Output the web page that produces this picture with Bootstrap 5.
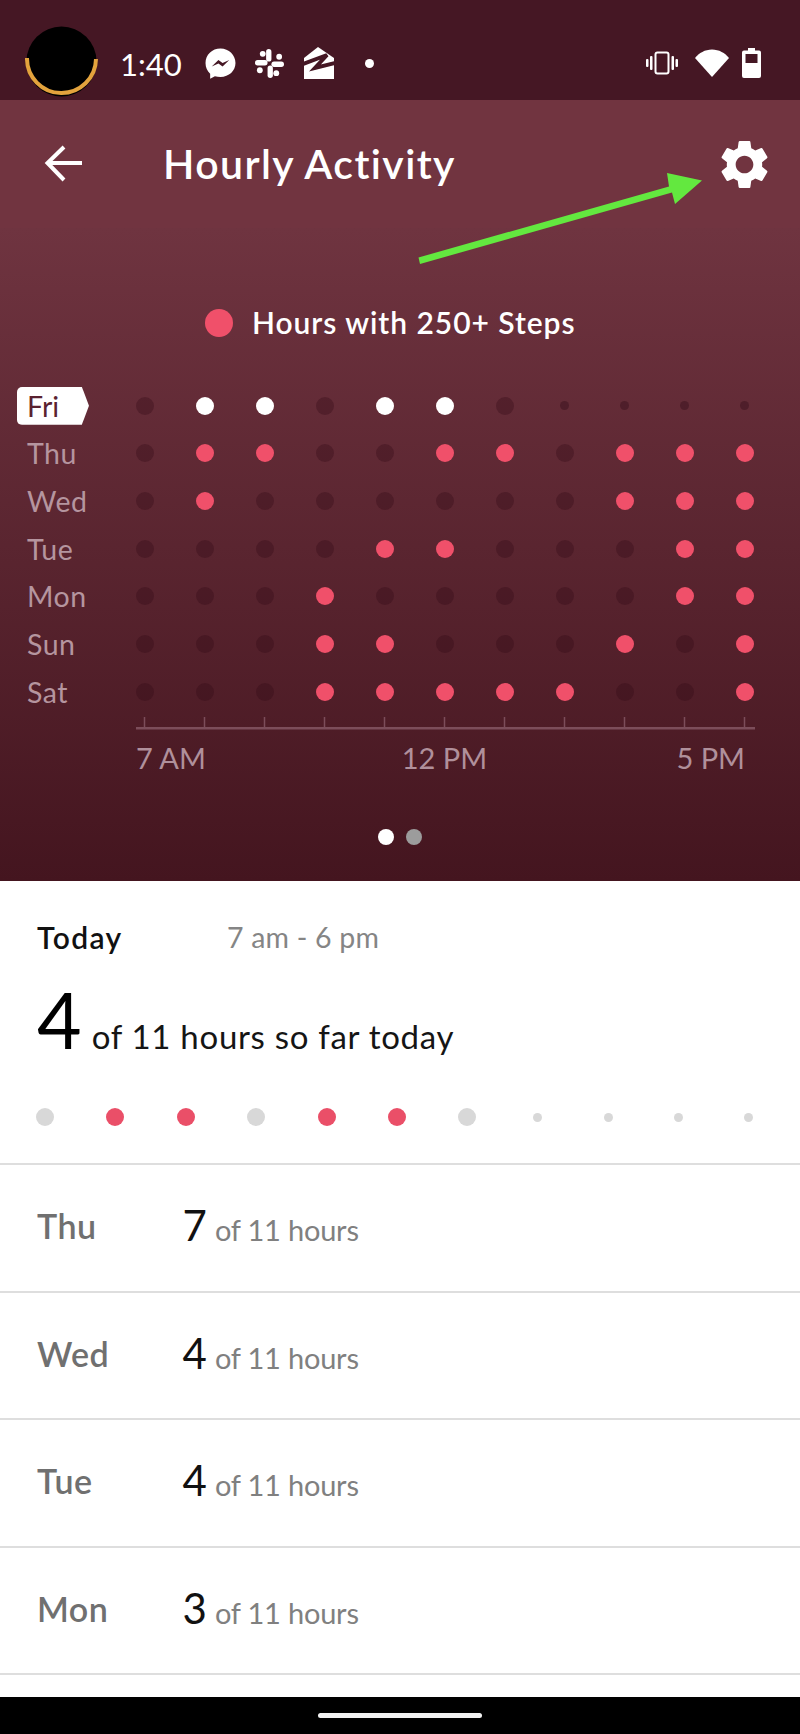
<!DOCTYPE html>
<html lang="en">
<head>
<meta charset="utf-8">
<title>Hourly Activity</title>
<link href="https://cdn.jsdelivr.net/npm/bootstrap@5.3.0/dist/css/bootstrap.min.css" rel="stylesheet">
<style>
html,body{margin:0;padding:0;background:#fff}
body{width:800px;height:1734px;overflow:hidden;font-family:"Lato","Liberation Sans",sans-serif;color:#000;position:relative}
.stat-bar{height:100px;background:#451724;color:#fff;padding-left:25px;padding-right:39px;padding-top:26px}
.avatar{width:73px;height:73px;margin-top:-4px;margin-right:22px;display:block}
.clock{font-size:31px;line-height:1;width:66px;margin-top:2px}
.ic-msg{margin-left:19px}
.ic-slack{margin-left:19px}
.ic-zil{margin-left:20px}
.ic-dot{margin-left:31px;width:9px;height:9px}
.ic-wifi{margin-left:17px}
.ic-bat{margin-left:13px}
.app-head{height:128px;background:#713440;color:#fff;padding-left:44px;padding-right:26px}
.app-title{font-size:41px;font-weight:600;margin:0 0 2px 81px;line-height:1;letter-spacing:1.4px}
.hero{height:653px;background:linear-gradient(#6f3440,#44151f);color:#fff}
.legend-row{padding-top:75px;height:115px;padding-left:205px}
.legend-dot{width:28px;height:28px;border-radius:50%;background:#f0506a;margin-right:19px}
.legend-text{font-size:30px;font-weight:600;line-height:40px;letter-spacing:.95px;margin-top:-2px}
.chart{margin-top:39px}
.day-row{height:47.67px;padding-left:27px}
.day-name{width:87.5px;font-size:28.5px;line-height:1;color:#b5959f;letter-spacing:.5px}
.day-tag{width:72px;height:38px;margin-left:-10px;margin-right:25.5px;padding-left:10px;background:#fff;color:#5a2230;font-size:28.5px;line-height:38px;border-radius:5px 0 0 5px;clip-path:polygon(0 0,90% 0,100% 50%,90% 100%,0 100%)}
.cell-h{width:60px;display:flex;justify-content:center;align-items:center}
.dt{width:18px;height:18px;border-radius:50%;background:rgba(48,10,22,.33);display:block}
.ds{width:9px;height:9px;border-radius:50%;background:rgba(48,10,22,.4);display:block}
.dp{width:18px;height:18px;border-radius:50%;background:#f0506a;display:block}
.dw{width:18px;height:18px;border-radius:50%;background:#fff;display:block}
.axis-svg{display:block;margin-left:136px;width:620px;height:14px}
.axis-labels{display:grid;grid-template-columns:1fr auto 1fr;margin:10px 55px 0 136px;font-size:29px;line-height:36px;color:#b0909b}
.pager{margin-top:53px;gap:12px}
.pg{width:16px;height:16px;border-radius:50%;background:#fff}
.pg-off{background:#9c9c9c}
.today-wrap{height:282px;background:#fff;padding:35px 0 0 37px}
.today-a{font-size:30px;font-weight:600;width:190px;line-height:42px;color:#111;letter-spacing:1.4px}
.today-b{font-size:28.5px;line-height:42px;color:#858585;letter-spacing:.2px}
.big-line{margin-top:21px;line-height:80px;height:80px}
.big-num{font-size:77px;line-height:80px;margin-right:10px}
.big-txt{font-size:33px;letter-spacing:.7px;color:#151515}
.today-dots{margin-top:49px;margin-left:-1px;height:18px}
.td-cell{flex:none;width:70.4px;display:flex;justify-content:flex-start}
.tg,.tr{width:18px;height:18px;border-radius:50%;display:block}
.tg{background:#d8d8d8}
.tr{background:#ea4f68}
.tx{width:9px;height:9px;border-radius:50%;background:#d8d8d8;display:block;margin:5px 0 0 4.5px}
.list-group-item.hour-row{height:127.6px;border:0;border-top:2px solid #dedede;padding:0 0 0 37px;background:#fff;border-radius:0}
.hr-day{width:145.5px;font-size:34px;font-weight:600;color:#707070;line-height:1;letter-spacing:.5px;margin-top:-3px}
.hr-num{font-size:42px;line-height:1;color:#111;margin-right:8px}
.hr-txt{font-size:29px;color:#808080;letter-spacing:-.2px}
.last-rule{border-top:2px solid #dedede;height:24px;background:#fff}
.nav-zone{height:37px;background:#000}
.home-bar{width:164px;height:5px;background:#f2f2f2;border-radius:3px}
.arrow-over{position:absolute;left:410px;top:170px;width:300px;height:100px}
</style>
</head>
<body>
<div class="stat-bar d-flex align-items-center">
  <svg class="avatar" viewBox="0 0 73 73"><circle cx="36.500" cy="36.500" r="35" fill="#000"/><path d="M2 33a34.500 34.500 0 0 0 69 1" fill="none" stroke="#e3a33d" stroke-width="4"/></svg>
  <span class="clock">1:40</span>
  <svg class="ic-msg" width="31" height="31" viewBox="0 0 30 30"><path d="M15 .5C6.800.5.500 6.500.500 14.500c0 4.200 1.700 7.800 4.500 10.300v5l4.600-2.500c1.700.5 3.500.7 5.400.7 8.200 0 14.500-6 14.500-13.500S23.200.5 15 .5z" fill="#fff"/><path d="M6.500 18l6.500-6.500 4 3 6.500-3-6.500 6.500-4-3z" fill="#451724"/></svg>
  <svg class="ic-slack" width="29" height="29" viewBox="0 0 30 30" fill="#fff"><rect x="0" y="11.500" width="13" height="5.500" rx="2.750"/><rect x="17" y="13" width="13" height="5.500" rx="2.750"/><rect x="11.500" y="0" width="5.500" height="13" rx="2.750"/><rect x="13" y="17" width="5.500" height="13" rx="2.750"/><circle cx="8" cy="5" r="3"/><circle cx="25" cy="8" r="3"/><circle cx="22" cy="25" r="3"/><circle cx="5" cy="22" r="3"/></svg>
  <svg class="ic-zil" width="30" height="32" viewBox="0 0 30 32"><path d="M14 0L30 11v21H0V11z" fill="#fff"/><path d="M-1 17L23 8 11 21l20-5" fill="none" stroke="#451724" stroke-width="4"/></svg>
  <span class="ic-dot d-block rounded-circle bg-white"></span>
  <span class="flex-grow-1"></span>
  <svg width="32" height="24" viewBox="0 0 32 24" fill="#fff"><rect x="0" y="8" width="2.500" height="8" rx="1"/><rect x="4" y="5" width="2.500" height="14" rx="1"/><rect x="25.500" y="5" width="2.500" height="14" rx="1"/><rect x="29.500" y="8" width="2.500" height="8" rx="1"/><rect x="9.500" y="1.500" width="13" height="21" rx="2" fill="none" stroke="#fff" stroke-width="2"/></svg>
  <svg class="ic-wifi" width="34" height="28" viewBox="0 0 34 28"><path d="M0 9C4 4 10 .5 17 .5S30 4 34 9L17 28z" fill="#fff"/></svg>
  <svg class="ic-bat" width="19" height="30" viewBox="0 0 19 30"><path d="M6 0h7v2.500h4a2 2 0 0 1 2 2V28a2 2 0 0 1-2 2H2a2 2 0 0 1-2-2V4.500a2 2 0 0 1 2-2h4z" fill="#fff"/><rect x="3.500" y="6" width="12" height="9" fill="#451724"/></svg>
</div>
<div class="app-head d-flex align-items-center">
  <svg width="38" height="38" viewBox="0 0 38 38" fill="none" stroke="#fff" stroke-width="4"><path d="M38 18H4M20 2 3.500 18 20 35"/></svg>
  <h1 class="app-title">Hourly Activity</h1>
  <span class="flex-grow-1"></span>
  <svg width="59" height="59" viewBox="0 0 24 24" fill="#fff"><path d="M19.140 12.940c.04-.3.06-.61.06-.94 0-.32-.02-.64-.07-.94l2.030-1.580c.18-.14.23-.41.12-.61l-1.920-3.320c-.12-.22-.37-.29-.59-.22l-2.390.96c-.5-.38-1.030-.7-1.620-.94l-.36-2.540c-.04-.24-.24-.41-.48-.41h-3.840c-.24 0-.43.17-.47.41l-.36 2.540c-.59.24-1.130.57-1.620.94l-2.390-.96c-.22-.08-.47 0-.59.22L2.740 8.870c-.12.21-.08.47.12.61l2.030 1.580c-.05.3-.09.63-.09.94s.02.64.07.94l-2.030 1.580c-.18.14-.23.41-.12.61l1.920 3.320c.12.22.37.29.59.22l2.390-.96c.5.38 1.030.7 1.620.94l.36 2.540c.05.24.24.41.48.41h3.840c.24 0 .44-.17.47-.41l.36-2.540c.59-.24 1.130-.56 1.620-.94l2.390.96c.22.08.47 0 .59-.22l1.920-3.320c.12-.22.07-.47-.12-.61l-2.010-1.580zM12 15.600c-1.980 0-3.600-1.620-3.600-3.600s1.620-3.600 3.600-3.600 3.600 1.620 3.600 3.600-1.620 3.600-3.600 3.600z"/></svg>
</div>
<div class="hero">
  <div class="legend-row d-flex align-items-center"><span class="legend-dot"></span><span class="legend-text">Hours with 250+ Steps</span></div>
  <div class="chart">
    <div class="day-row d-flex align-items-center"><span class="day-tag">Fri</span><span class="cell-h"><i class="dt"></i></span><span class="cell-h"><i class="dw"></i></span><span class="cell-h"><i class="dw"></i></span><span class="cell-h"><i class="dt"></i></span><span class="cell-h"><i class="dw"></i></span><span class="cell-h"><i class="dw"></i></span><span class="cell-h"><i class="dt"></i></span><span class="cell-h"><i class="ds"></i></span><span class="cell-h"><i class="ds"></i></span><span class="cell-h"><i class="ds"></i></span><span class="cell-h"><i class="ds"></i></span></div>
    <div class="day-row d-flex align-items-center"><span class="day-name">Thu</span><span class="cell-h"><i class="dt"></i></span><span class="cell-h"><i class="dp"></i></span><span class="cell-h"><i class="dp"></i></span><span class="cell-h"><i class="dt"></i></span><span class="cell-h"><i class="dt"></i></span><span class="cell-h"><i class="dp"></i></span><span class="cell-h"><i class="dp"></i></span><span class="cell-h"><i class="dt"></i></span><span class="cell-h"><i class="dp"></i></span><span class="cell-h"><i class="dp"></i></span><span class="cell-h"><i class="dp"></i></span></div>
    <div class="day-row d-flex align-items-center"><span class="day-name">Wed</span><span class="cell-h"><i class="dt"></i></span><span class="cell-h"><i class="dp"></i></span><span class="cell-h"><i class="dt"></i></span><span class="cell-h"><i class="dt"></i></span><span class="cell-h"><i class="dt"></i></span><span class="cell-h"><i class="dt"></i></span><span class="cell-h"><i class="dt"></i></span><span class="cell-h"><i class="dt"></i></span><span class="cell-h"><i class="dp"></i></span><span class="cell-h"><i class="dp"></i></span><span class="cell-h"><i class="dp"></i></span></div>
    <div class="day-row d-flex align-items-center"><span class="day-name">Tue</span><span class="cell-h"><i class="dt"></i></span><span class="cell-h"><i class="dt"></i></span><span class="cell-h"><i class="dt"></i></span><span class="cell-h"><i class="dt"></i></span><span class="cell-h"><i class="dp"></i></span><span class="cell-h"><i class="dp"></i></span><span class="cell-h"><i class="dt"></i></span><span class="cell-h"><i class="dt"></i></span><span class="cell-h"><i class="dt"></i></span><span class="cell-h"><i class="dp"></i></span><span class="cell-h"><i class="dp"></i></span></div>
    <div class="day-row d-flex align-items-center"><span class="day-name">Mon</span><span class="cell-h"><i class="dt"></i></span><span class="cell-h"><i class="dt"></i></span><span class="cell-h"><i class="dt"></i></span><span class="cell-h"><i class="dp"></i></span><span class="cell-h"><i class="dt"></i></span><span class="cell-h"><i class="dt"></i></span><span class="cell-h"><i class="dt"></i></span><span class="cell-h"><i class="dt"></i></span><span class="cell-h"><i class="dt"></i></span><span class="cell-h"><i class="dp"></i></span><span class="cell-h"><i class="dp"></i></span></div>
    <div class="day-row d-flex align-items-center"><span class="day-name">Sun</span><span class="cell-h"><i class="dt"></i></span><span class="cell-h"><i class="dt"></i></span><span class="cell-h"><i class="dt"></i></span><span class="cell-h"><i class="dp"></i></span><span class="cell-h"><i class="dp"></i></span><span class="cell-h"><i class="dt"></i></span><span class="cell-h"><i class="dt"></i></span><span class="cell-h"><i class="dt"></i></span><span class="cell-h"><i class="dp"></i></span><span class="cell-h"><i class="dt"></i></span><span class="cell-h"><i class="dp"></i></span></div>
    <div class="day-row d-flex align-items-center"><span class="day-name">Sat</span><span class="cell-h"><i class="dt"></i></span><span class="cell-h"><i class="dt"></i></span><span class="cell-h"><i class="dt"></i></span><span class="cell-h"><i class="dp"></i></span><span class="cell-h"><i class="dp"></i></span><span class="cell-h"><i class="dp"></i></span><span class="cell-h"><i class="dp"></i></span><span class="cell-h"><i class="dp"></i></span><span class="cell-h"><i class="dt"></i></span><span class="cell-h"><i class="dt"></i></span><span class="cell-h"><i class="dp"></i></span></div>
  </div>
  <svg class="axis-svg" viewBox="0 0 620 14"><rect x="0" y="11" width="619" height="2.500" fill="#7c4d5a"/><g stroke="#7c4d5a" stroke-width="1.500"><path d="M8.500 1v10M68.500 1v10M128.500 1v10M188.500 1v10M248.500 1v10M308.500 1v10M368.500 1v10M428.500 1v10M488.500 1v10M548.500 1v10M608.500 1v10"/></g></svg>
  <div class="axis-labels"><span>7 AM</span><span class="ms-2">12 PM</span><span class="text-end">5 PM</span></div>
  <div class="pager d-flex justify-content-center"><span class="pg"></span><span class="pg pg-off"></span></div>
</div>
<div class="today-wrap">
  <div class="d-flex"><span class="today-a">Today</span><span class="today-b">7 am - 6 pm</span></div>
  <div class="big-line"><span class="big-num">4</span><span class="big-txt">of 11 hours so far today</span></div>
  <div class="today-dots d-flex"><span class="td-cell"><i class="tg"></i></span><span class="td-cell"><i class="tr"></i></span><span class="td-cell"><i class="tr"></i></span><span class="td-cell"><i class="tg"></i></span><span class="td-cell"><i class="tr"></i></span><span class="td-cell"><i class="tr"></i></span><span class="td-cell"><i class="tg"></i></span><span class="td-cell"><i class="tx"></i></span><span class="td-cell"><i class="tx"></i></span><span class="td-cell"><i class="tx"></i></span><span class="td-cell"><i class="tx"></i></span></div>
</div>
<ul class="list-group list-group-flush">
  <li class="list-group-item hour-row d-flex align-items-center"><span class="hr-day">Thu</span><span><span class="hr-num">7</span><span class="hr-txt">of 11 hours</span></span></li>
  <li class="list-group-item hour-row d-flex align-items-center"><span class="hr-day">Wed</span><span><span class="hr-num">4</span><span class="hr-txt">of 11 hours</span></span></li>
  <li class="list-group-item hour-row d-flex align-items-center"><span class="hr-day">Tue</span><span><span class="hr-num">4</span><span class="hr-txt">of 11 hours</span></span></li>
  <li class="list-group-item hour-row d-flex align-items-center"><span class="hr-day">Mon</span><span><span class="hr-num">3</span><span class="hr-txt">of 11 hours</span></span></li>
</ul>
<div class="last-rule"></div>
<div class="nav-zone d-flex align-items-center justify-content-center"><span class="home-bar"></span></div>
<svg class="arrow-over" viewBox="410 170 300 100"><path d="M418.500 257.500L669 186.500 667 173 702 180.500 675 204 672 192.500 420 264z" fill="#63e83f"/></svg>
</body>
</html>
